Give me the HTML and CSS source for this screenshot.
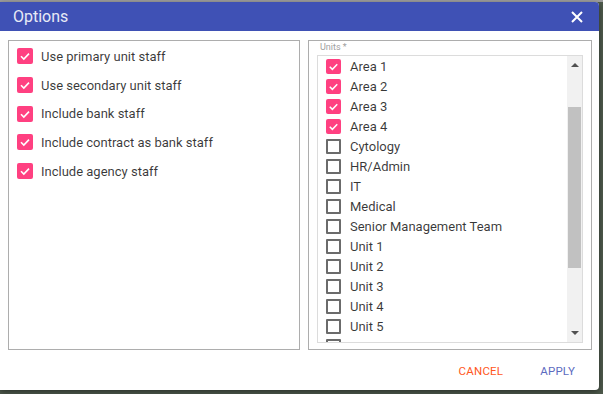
FILE: index.html
```html
<!DOCTYPE html>
<html lang="en">
<head>
    <meta charset="UTF-8">
    <title>Options</title>
    <link rel="stylesheet" href="styles.css">
</head>
<body>
    <div class="dialog">
        <div class="dialog-header">
            <span class="dialog-title">Options</span>
            <svg class="close" width="12" height="12" viewBox="0 0 12 12">
                <path d="M1 1 L11 11 M11 1 L1 11" stroke="#fff" stroke-width="2"/>
            </svg>
        </div>

        <div class="dialog-body">
            <div class="panel staff">
                <label class="opt"><span class="box checked"></span>Use primary unit staff</label>
                <label class="opt"><span class="box checked"></span>Use secondary unit staff</label>
                <label class="opt"><span class="box checked"></span>Include bank staff</label>
                <label class="opt"><span class="box checked"></span>Include contract as bank staff</label>
                <label class="opt"><span class="box checked"></span>Include agency staff</label>
            </div>

            <div class="panel units">
                <div class="units-label">Units *</div>
                <div class="list">
                    <div class="list-items" id="unitList"></div>
                    <div class="scrollbar">
                        <span class="arrow up"></span>
                        <span class="thumb"></span>
                        <span class="arrow down"></span>
                    </div>
                </div>
            </div>
        </div>

        <div class="dialog-footer">
            <button class="btn cancel">Cancel</button>
            <button class="btn apply">Apply</button>
        </div>
    </div>

    <script>
        var units = [
            ["Area 1", true], ["Area 2", true], ["Area 3", true], ["Area 4", true],
            ["Cytology", false], ["HR/Admin", false], ["IT", false], ["Medical", false],
            ["Senior Management Team", false], ["Unit 1", false], ["Unit 2", false],
            ["Unit 3", false], ["Unit 4", false], ["Unit 5", false], ["Unit 6", false]
        ];
        var list = document.getElementById("unitList");
        units.forEach(function (u) {
            list.innerHTML += '<label class="unit"><span class="box' + (u[1] ? ' checked' : '') + '"></span>' + u[0] + '</label>';
        });
    </script>
</body>
</html>
```

FILE: styles.css
```css
html, body {
    margin: 0;
    height: 100%;
}
body {
    font-family: Roboto, "Liberation Sans", sans-serif;
    background: linear-gradient(#9e9e9e 0, #9e9e9e 2px, #4e5a4c 2px);
    overflow: hidden;
}
.dialog {
    margin-top: 2px;
    width: 599px;
    height: 388px;
    background: #fff;
    border-radius: 0 4px 4px 0;
    box-shadow: 0 2px 6px rgba(0, 0, 0, 0.45);
    display: flex;
    flex-direction: column;
}
.dialog-header {
    height: 29px;
    background: #3f51b5;
    border-radius: 0 4px 0 0;
    display: flex;
    align-items: center;
    justify-content: space-between;
    padding: 0 16px 0 13px;
}
.dialog-title {
    color: #e8eaf6;
    font-size: 16px;
}
.close {
    display: block;
}
.dialog-body {
    display: flex;
    gap: 8px;
    padding: 9px 7px 0 8px;
    height: 310px;
}
.panel {
    border: 1px solid #adadad;
    box-sizing: border-box;
    height: 310px;
}
.staff {
    width: 292px;
    padding: 1px 0 0 8px;
}
.opt {
    display: flex;
    align-items: center;
    gap: 8px;
    height: 28.7px;
    font-size: 13px;
    color: rgba(0, 0, 0, 0.78);
}
.box {
    width: 15px;
    height: 15px;
    box-sizing: border-box;
    border: 2px solid #6b6b6b;
    border-radius: 1px;
    flex: none;
}
.opt .box {
    width: 16px;
    height: 16px;
}
.box.checked {
    border: none;
    border-radius: 2px;
    background: #ff4081 url("data:image/svg+xml;utf8,<svg xmlns='http://www.w3.org/2000/svg' viewBox='0 0 16 16'><polyline points='4,8.2 6.8,11 12,5.6' fill='none' stroke='white' stroke-width='1.6'/></svg>") center / 100% no-repeat;
}
.units {
    width: 284px;
    padding: 0 8px 6px 8px;
    display: flex;
    flex-direction: column;
}
.units-label {
    font-size: 9px;
    color: #a0a0a0;
    height: 14px;
    line-height: 13px;
    padding-left: 3px;
}
.list {
    flex: 1;
    border: 1px solid #dcdcdc;
    display: flex;
    overflow: hidden;
}
.list-items {
    flex: 1;
    padding-left: 8px;
    overflow: hidden;
}
.unit {
    display: flex;
    align-items: center;
    gap: 9px;
    height: 20px;
    font-size: 13px;
    color: rgba(0, 0, 0, 0.78);
}
.scrollbar {
    width: 15px;
    background: #f1f1f1;
    display: flex;
    flex-direction: column;
    align-items: center;
}
.arrow {
    width: 0;
    height: 0;
    border-left: 4px solid transparent;
    border-right: 4px solid transparent;
}
.arrow.up {
    margin-top: 7px;
    border-bottom: 4px solid #505050;
}
.arrow.down {
    margin-top: auto;
    margin-bottom: 7px;
    border-top: 4px solid #505050;
}
.thumb {
    width: 13px;
    height: 161px;
    margin-top: 40px;
    background: #c1c1c1;
}
.dialog-footer {
    flex: 1;
    display: flex;
    justify-content: flex-end;
    align-items: center;
    gap: 21px;
    padding: 2px 16px 0 0;
}
.btn {
    background: none;
    border: none;
    font-family: inherit;
    font-size: 11.5px;
    text-transform: uppercase;
    letter-spacing: 0.2px;
    padding: 6px 8px;
}
.cancel {
    color: #ff5722;
}
.apply {
    color: #5c6bc0;
}
```
